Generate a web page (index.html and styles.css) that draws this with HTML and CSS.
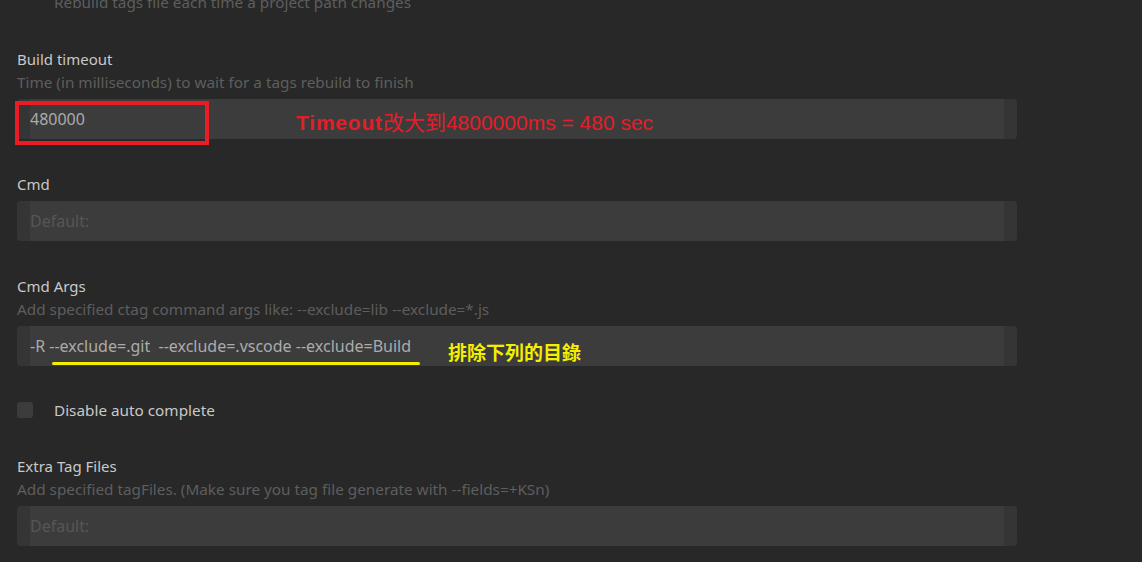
FILE: index.html
```html
<!DOCTYPE html>
<html>
<head>
<meta charset="utf-8">
<link rel="stylesheet" href="styles.css">
</head>
<body>
<div class="page">
  <div class="setting first">
    <div class="desc indent">Rebuild tags file each time a project path changes</div>
  </div>

  <div class="setting">
    <div class="title">Build timeout</div>
    <div class="desc">Time (in milliseconds) to wait for a tags rebuild to finish</div>
    <div class="field-wrap">
      <div class="field"><span class="value">480000</span></div>
      <div class="red-box"></div>
      <div class="note-red"><b>Timeout</b>改大到4800000ms = 480 sec</div>
    </div>
  </div>

  <div class="setting">
    <div class="title">Cmd</div>
    <div class="field"><span class="placeholder">Default:</span></div>
  </div>

  <div class="setting before-check">
    <div class="title">Cmd Args</div>
    <div class="desc">Add specified ctag command args like: --exclude=lib --exclude=*.js</div>
    <div class="field-wrap">
      <div class="field"><span class="value">-R --exclude=.git&nbsp; --exclude=.vscode --exclude=Build</span></div>
      <div class="yellow-line"></div>
      <div class="note-yellow">排除下列的目錄</div>
    </div>
  </div>

  <div class="setting check-row">
    <span class="checkbox"></span>
    <span class="check-label">Disable auto complete</span>
  </div>

  <div class="setting">
    <div class="title">Extra Tag Files</div>
    <div class="desc">Add specified tagFiles. (Make sure you tag file generate with --fields=+KSn)</div>
    <div class="field"><span class="placeholder">Default:</span></div>
  </div>
</div>
</body>
</html>
```

FILE: styles.css
```css
html, body {
  margin: 0;
  padding: 0;
  background: #282828;
  overflow: hidden;
}
body {
  font-family: "Noto Sans", "Open Sans", sans-serif;
  font-size: 15px;
}
.page {
  width: 1000px;
  padding-left: 17px;
}
.setting {
  margin-bottom: 34px;
}
.setting.before-check {
  margin-bottom: 32px;
}
.setting.first {
  margin-top: -9px;
}
.title {
  color: #c9c9c9;
  font-size: 15px;
  line-height: 23px;
}
.desc {
  color: #5e5e5e;
  font-size: 15.3px;
  line-height: 23px;
  white-space: nowrap;
}
.indent {
  padding-left: 37px;
}
.field-wrap {
  position: relative;
}
.field {
  margin-top: 5px;
  height: 40px;
  border-radius: 4px;
  background: linear-gradient(to right, #353535 13px, #3c3c3c 13px, #3c3c3c calc(100% - 13px), #353535 calc(100% - 13px));
  display: flex;
  align-items: center;
  padding-left: 13px;
  box-sizing: border-box;
  font-size: 16px;
}
.value {
  color: #ababab;
  white-space: nowrap;
}
.placeholder {
  color: #565656;
}
.red-box {
  position: absolute;
  left: -2px;
  top: 2px;
  width: 194px;
  height: 44px;
  box-sizing: border-box;
  border: 4px solid #ec1c24;
}
.note-red {
  position: absolute;
  left: 279px;
  top: 10px;
  font-family: "Liberation Sans", Arial, "Noto Sans CJK TC", sans-serif;
  font-size: 21px;
  line-height: 28px;
  color: #e51d28;
  white-space: nowrap;
}
.note-red b {
  font-weight: 900;
  letter-spacing: 0.8px;
}
.yellow-line {
  position: absolute;
  left: 35px;
  top: 36px;
  width: 368px;
  height: 3px;
  border-radius: 2px;
  background: #f4ee00;
}
.note-yellow {
  position: absolute;
  left: 431px;
  top: 12px;
  font-family: "Noto Sans CJK TC", sans-serif;
  font-weight: 700;
  font-size: 19px;
  line-height: 28px;
  color: #f4ee00;
  white-space: nowrap;
}
.check-row {
  display: flex;
  align-items: center;
  height: 23px;
}
.checkbox {
  width: 16px;
  height: 16px;
  border-radius: 3px;
  background: #3c3c3c;
  margin-right: 21px;
}
.check-label {
  color: #c9c9c9;
  font-size: 15.3px;
}
```
